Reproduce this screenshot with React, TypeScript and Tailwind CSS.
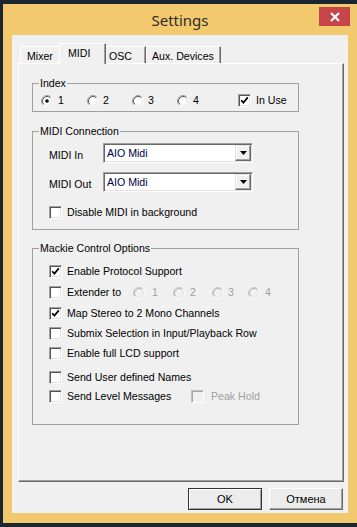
import React from "react"

const ui = "font-['Liberation_Sans',Arial,sans-serif] text-[10.6px] leading-[13px] text-black"

function Check({ on = false, off = false }: { on?: boolean; off?: boolean }) {
  return (
    <span
      className={
        off
          ? "flex h-[13px] w-[13px] shrink-0 items-center justify-center border border-t-[#c0c0c0] border-l-[#c0c0c0] border-r-white border-b-white bg-[#f0f0f0] shadow-[inset_1px_1px_0_#a8a8a8]"
          : "flex h-[13px] w-[13px] shrink-0 items-center justify-center border border-t-[#a0a0a0] border-l-[#a0a0a0] border-r-white border-b-white bg-white shadow-[inset_1px_1px_0_#555,inset_-1px_-1px_0_#e3e3e3]"
      }
    >
      {on && (
        <svg width="9" height="9" viewBox="0 0 9 9">
          <path d="M1.2 4.2 L3.4 6.6 L7.8 1.4" fill="none" stroke="#000" strokeWidth="1.7" />
        </svg>
      )}
    </span>
  )
}

function Radio({ on = false, off = false }: { on?: boolean; off?: boolean }) {
  return (
    <svg width="12" height="12" viewBox="0 0 12 12" className="shrink-0">
      <circle cx="6" cy="6" r="5" fill={off ? "#f0f0f0" : "#fff"} />
      <path d="M2.11 9.89 A5.5 5.5 0 0 1 9.89 2.11" fill="none" stroke={off ? "#c8c8c8" : "#a0a0a0"} />
      <path d="M9.89 2.11 A5.5 5.5 0 0 1 2.11 9.89" fill="none" stroke="#fff" />
      <path d="M2.82 9.18 A4.5 4.5 0 0 1 9.18 2.82" fill="none" stroke={off ? "#b4b4b4" : "#555"} />
      <path d="M9.18 2.82 A4.5 4.5 0 0 1 2.82 9.18" fill="none" stroke="#e3e3e3" />
      {on && <circle cx="6" cy="6" r="1.8" fill="#000" />}
    </svg>
  )
}

function Select({ value }: { value: string }) {
  return (
    <div className="flex h-[20px] w-[150px] items-center border border-t-[#a0a0a0] border-l-[#a0a0a0] border-r-white border-b-white bg-white shadow-[inset_1px_1px_0_#696969,inset_-1px_-1px_0_#e3e3e3]">
      <span className="flex-1 pl-[3px] text-[#000040]">{value}</span>
      <span className="mr-px flex h-[16px] w-[16px] items-center justify-center border border-t-[#e3e3e3] border-l-[#e3e3e3] border-r-[#696969] border-b-[#696969] bg-[#f0f0f0] shadow-[inset_-1px_-1px_0_#a0a0a0,inset_1px_1px_0_#fff]">
        <svg width="7" height="4" viewBox="0 0 7 4">
          <path d="M0 0 H7 L3.5 4 Z" fill="#000" />
        </svg>
      </span>
    </div>
  )
}

export default function App() {
  return (
    <div className={`flex h-[527px] w-[357px] flex-col overflow-hidden bg-[#1b2730] pb-[4px] pl-[3px] pt-[4px] ${ui}`}>
      <div className="flex flex-1 flex-col bg-[#f2c96c]">
        {/* title bar */}
        <div className="relative flex h-[31px] shrink-0 items-center justify-center">
          <span className="font-['Noto_Sans',sans-serif] text-[15px] leading-[20px] text-[#2e2e2e]">Settings</span>
          <div className="absolute right-[7px] top-[3px] flex h-[19px] w-[31px] items-center justify-center bg-[#c8444b]">
            <svg width="10" height="10" viewBox="0 0 10 10">
              <path d="M1 1 L9 9 M9 1 L1 9" stroke="#fff" strokeWidth="2.2" />
            </svg>
          </div>
        </div>

        {/* client */}
        <div className="mx-[9px] mb-[10px] flex flex-1 flex-col bg-[#f0f0f0] pl-[6px] pr-[4px] pt-[8px]">
          {/* tabs */}
          <div className="flex h-[20px] items-end pl-[2px]">
            <div className="h-[17px] w-[39px] border-l border-t border-white pl-[6px] pt-[3px]">Mixer</div>
            <div className="relative z-10 -mb-px h-[21px] w-[47px] border-l border-r border-t border-l-white border-r-[#696969] border-t-white bg-[#f0f0f0] pl-[8px] pt-[3px] shadow-[inset_-1px_0_0_#a0a0a0]">
              MIDI
            </div>
            <div className="h-[17px] w-[40px] border-r border-t border-r-[#696969] border-t-white pl-[3px] pt-[3px] shadow-[inset_-1px_0_0_#a0a0a0]">
              OSC
            </div>
            <div className="h-[17px] w-[75px] border-l border-r border-t border-l-white border-r-[#696969] border-t-white pl-[5px] pt-[3px] shadow-[inset_-1px_0_0_#a0a0a0]">
              Aux. Devices
            </div>
          </div>

          {/* tab panel */}
          <div className="h-[419px] border border-b-[#696969] border-l-white border-r-[#696969] border-t-white bg-[#f0f0f0] pl-[13px] pt-[13px] shadow-[inset_-1px_-1px_0_#a0a0a0]">
            <fieldset className="w-[267px] border border-[#a0a0a0] px-[6px] pb-[4px]">
              <legend className="px-[1px] leading-[13px]">Index</legend>
              <div className="mt-[4px] flex h-[13px] items-center pl-[2px]">
                <div className="flex w-[46px] items-center gap-[5px]">
                  <Radio on />
                  <span>1</span>
                </div>
                <div className="flex w-[45px] items-center gap-[4px]">
                  <Radio />
                  <span>2</span>
                </div>
                <div className="flex w-[45px] items-center gap-[4px]">
                  <Radio />
                  <span>3</span>
                </div>
                <div className="flex w-[61px] items-center gap-[4px]">
                  <Radio />
                  <span>4</span>
                </div>
                <div className="flex items-center gap-[5px]">
                  <Check on />
                  <span>In Use</span>
                </div>
              </div>
            </fieldset>

            <fieldset className="mt-[13px] w-[267px] border border-[#a0a0a0] px-[6px] pb-[10px]">
              <legend className="px-[1px] leading-[13px]">MIDI Connection</legend>
              <div className="mt-[5px] flex h-[20px] items-center pl-[10px]">
                <span className="mt-[4px] w-[54px]">MIDI In</span>
                <Select value="AIO Midi" />
              </div>
              <div className="mt-[9px] flex h-[20px] items-center pl-[10px]">
                <span className="mt-[4px] w-[54px]">MIDI Out</span>
                <Select value="AIO Midi" />
              </div>
              <div className="mt-[14px] flex h-[13px] items-center gap-[5px] pl-[10px]">
                <Check />
                <span>Disable MIDI in background</span>
              </div>
            </fieldset>

            <fieldset className="mt-[12px] w-[267px] border border-[#a0a0a0] px-[6px] pb-[21px]">
              <legend className="px-[1px] leading-[13px]">Mackie Control Options</legend>
              <div className="pl-[10px]">
                <div className="mt-[10px] flex h-[13px] items-center gap-[5px]">
                  <Check on />
                  <span>Enable Protocol Support</span>
                </div>
                <div className="mt-[8px] flex h-[13px] items-center gap-[5px]">
                  <Check />
                  <span className="w-[61px]">Extender to</span>
                  <div className="flex w-[35px] items-center gap-[7px] text-[#a0a0a0]">
                    <Radio off />
                    <span>1</span>
                  </div>
                  <div className="flex w-[34px] items-center gap-[5px] text-[#a0a0a0]">
                    <Radio off />
                    <span>2</span>
                  </div>
                  <div className="flex w-[31px] items-center gap-[4px] text-[#a0a0a0]">
                    <Radio off />
                    <span>3</span>
                  </div>
                  <div className="flex items-center gap-[5px] text-[#a0a0a0]">
                    <Radio off />
                    <span>4</span>
                  </div>
                </div>
                <div className="mt-[8px] flex h-[13px] items-center gap-[5px]">
                  <Check on />
                  <span>Map Stereo to 2 Mono Channels</span>
                </div>
                <div className="mt-[7px] flex h-[13px] items-center gap-[5px]">
                  <Check />
                  <span>Submix Selection in Input/Playback Row</span>
                </div>
                <div className="mt-[7px] flex h-[13px] items-center gap-[5px]">
                  <Check />
                  <span>Enable full LCD support</span>
                </div>
                <div className="mt-[11px] flex h-[13px] items-center gap-[5px]">
                  <Check />
                  <span>Send User defined Names</span>
                </div>
                <div className="mt-[6px] flex h-[13px] items-center gap-[5px]">
                  <Check />
                  <span className="w-[119px]">Send Level Messages</span>
                  <Check off />
                  <span className="pl-[2px] text-[#a0a0a0]">Peak Hold</span>
                </div>
              </div>
            </fieldset>
          </div>

          {/* buttons */}
          <div className="mt-[6px] flex h-[22px] justify-end gap-[7px] pr-px">
            <button className="w-[74px] border border-[#333] bg-[#ececec] text-[11px] shadow-[inset_1px_1px_0_#fff,inset_-1px_-1px_0_#a0a0a0]">
              OK
            </button>
            <button className="w-[74px] border border-b-[#696969] border-l-white border-r-[#696969] border-t-white bg-[#ececec] text-[11px] shadow-[inset_-1px_-1px_0_#a0a0a0]">
              Отмена
            </button>
          </div>
        </div>
      </div>
    </div>
  )
}
